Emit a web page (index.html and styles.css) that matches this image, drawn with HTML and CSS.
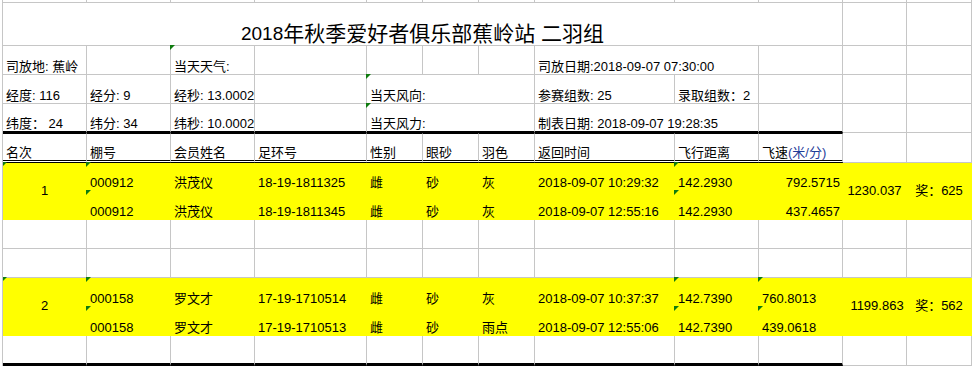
FILE: index.html
```html
<!DOCTYPE html>
<html lang="zh-CN">
<head>
<meta charset="utf-8">
<title>2018年秋季爱好者俱乐部蕉岭站 二羽组</title>
<link rel="stylesheet" href="styles.css">
</head>
<body>
<div class="sheet">
  <!-- partial top row -->
  <div class="c"></div><div class="c"></div><div class="c"></div><div class="c"></div><div class="c"></div><div class="c"></div><div class="c"></div><div class="c"></div><div class="c"></div><div class="c"></div><div class="c"></div><div class="c"></div>

  <!-- title -->
  <div class="c title"><span class="yr">2018</span>年秋季爱好者俱乐部蕉岭站 二羽组</div>
  <div class="c"></div><div class="c"></div>

  <!-- info row 1 -->
  <div class="c">司放地: 蕉岭</div>
  <div class="c"></div>
  <div class="c tri">当天天气:</div>
  <div class="c"></div>
  <div class="c"></div>
  <div class="c"></div>
  <div class="c"></div>
  <div class="c span2">司放日期:2018-09-07 07:30:00</div>
  <div class="c"></div>
  <div class="c"></div><div class="c"></div>

  <!-- info row 2 -->
  <div class="c">经度: 116</div>
  <div class="c">经分: 9</div>
  <div class="c">经秒: 13.0002</div>
  <div class="c"></div>
  <div class="c span3 tri">当天风向:</div>
  <div class="c">参赛组数: 25</div>
  <div class="c">录取组数：2</div>
  <div class="c"></div>
  <div class="c"></div><div class="c"></div>

  <!-- info row 3 -->
  <div class="c thick">纬度： 24</div>
  <div class="c thick">纬分: 34</div>
  <div class="c thick">纬秒: 10.0002</div>
  <div class="c thick"></div>
  <div class="c thick span3 tri">当天风力:</div>
  <div class="c thick span2">制表日期: 2018-09-07 19:28:35</div>
  <div class="c thick"></div>
  <div class="c"></div><div class="c"></div>

  <!-- header -->
  <div class="c hd">名次</div>
  <div class="c hd">棚号</div>
  <div class="c hd">会员姓名</div>
  <div class="c hd">足环号</div>
  <div class="c hd">性别</div>
  <div class="c hd">眼砂</div>
  <div class="c hd">羽色</div>
  <div class="c hd">返回时间</div>
  <div class="c hd">飞行距离</div>
  <div class="c hd">飞速<span class="unit">(米/分)</span></div>
  <div class="c"></div><div class="c"></div>

  <!-- group 1 -->
  <div class="c y rs tri">1</div>
  <div class="c y tri">000912</div>
  <div class="c y">洪茂仪</div>
  <div class="c y">18-19-1811325</div>
  <div class="c y">雌</div>
  <div class="c y">砂</div>
  <div class="c y">灰</div>
  <div class="c y">2018-09-07 10:29:32</div>
  <div class="c y tri">142.2930</div>
  <div class="c y r">792.5715</div>
  <div class="c y rs">1230.037</div>
  <div class="c y rs">奖：625</div>

  <div class="c y tri">000912</div>
  <div class="c y">洪茂仪</div>
  <div class="c y">18-19-1811345</div>
  <div class="c y">雌</div>
  <div class="c y">砂</div>
  <div class="c y">灰</div>
  <div class="c y">2018-09-07 12:55:16</div>
  <div class="c y tri">142.2930</div>
  <div class="c y r">437.4657</div>

  <!-- empty rows -->
  <div class="c"></div><div class="c"></div><div class="c"></div><div class="c"></div><div class="c"></div><div class="c"></div><div class="c"></div><div class="c"></div><div class="c"></div><div class="c"></div><div class="c"></div><div class="c"></div>
  <div class="c"></div><div class="c"></div><div class="c"></div><div class="c"></div><div class="c"></div><div class="c"></div><div class="c"></div><div class="c"></div><div class="c"></div><div class="c"></div><div class="c"></div><div class="c"></div>

  <!-- group 2 -->
  <div class="c y rs tri">2</div>
  <div class="c y tri">000158</div>
  <div class="c y">罗文才</div>
  <div class="c y">17-19-1710514</div>
  <div class="c y">雌</div>
  <div class="c y">砂</div>
  <div class="c y">灰</div>
  <div class="c y">2018-09-07 10:37:37</div>
  <div class="c y tri">142.7390</div>
  <div class="c y tri">760.8013</div>
  <div class="c y rs k2">1199.863</div>
  <div class="c y rs">奖：562</div>

  <div class="c y tri">000158</div>
  <div class="c y">罗文才</div>
  <div class="c y">17-19-1710513</div>
  <div class="c y">雌</div>
  <div class="c y">砂</div>
  <div class="c y">雨点</div>
  <div class="c y">2018-09-07 12:55:06</div>
  <div class="c y tri">142.7390</div>
  <div class="c y tri">439.0618</div>

  <!-- last row -->
  <div class="c bot"></div><div class="c bot"></div><div class="c bot"></div><div class="c bot"></div><div class="c bot"></div><div class="c bot"></div><div class="c bot"></div><div class="c bot"></div><div class="c bot"></div><div class="c bot"></div><div class="c"></div><div class="c"></div>
</div>
</body>
</html>
```

FILE: styles.css
```css
html, body {
  margin: 0;
  padding: 0;
  background: #ffffff;
}

.sheet {
  display: grid;
  width: 969px;
  margin-left: 2px;
  border-left: 1px solid #c6c6c6;
  grid-template-columns: 84px 84px 84px 112px 56px 56px 56px 140px 84px 84px 64px 65px;
  grid-template-rows: 3px 43px 29px 29px 29px 30px 28px 29px 29px 29px 29px 29px 30px;
  font-family: "Liberation Sans", "Noto Sans CJK SC", sans-serif;
  font-size: 13px;
  line-height: 15px;
  color: #000;
  overflow: hidden;
  height: 366px;
}

.c {
  box-sizing: border-box;
  position: relative;
  display: flex;
  align-items: flex-end;
  padding: 0 3px;
  white-space: nowrap;
  min-width: 0;
  border-right: 1px solid #c6c6c6;
  border-bottom: 1px solid #c6c6c6;
}

.title {
  grid-column: span 10;
  justify-content: center;
  font-size: 21px;
  line-height: 22px;
}

.yr {
  font-size: 19px;
}

.span2 {
  grid-column: span 2;
}

.span3 {
  grid-column: span 3;
}

.thick {
  border-bottom: 2px solid #000;
}

.hd {
  border-top: 1px solid #000;
  border-bottom: 3px double #000;
}

.bot {
  border-bottom: 3px solid #000;
}

.unit {
  color: #1f3d99;
}

.y {
  background: #ffff00;
  border-color: #ffff00;
}

.rs {
  grid-row: span 2;
  align-items: center;
  justify-content: center;
  padding-bottom: 2px;
}

.k2 {
  padding-left: 8px;
}

.r {
  justify-content: flex-end;
  padding-right: 2px;
}

.tri::before {
  content: "";
  position: absolute;
  top: -1px;
  left: -1px;
  width: 0;
  height: 0;
  border-top: 5px solid #0f7b0f;
  border-right: 5px solid transparent;
}
```
